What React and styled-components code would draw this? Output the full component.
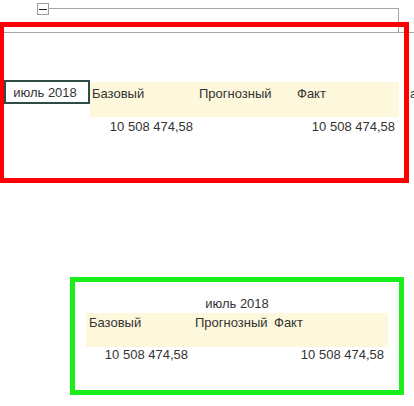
import React from 'react';
import styled, { createGlobalStyle } from 'styled-components';

const GlobalStyle = createGlobalStyle`
  body {
    margin: 0;
    background: #fff;
    font-family: "Liberation Sans", Arial, sans-serif;
    font-size: 13px;
    color: #333;
  }
`;

const Page = styled.div`
  width: 414px;
  height: 406px;
  overflow: hidden;
`;

const GroupHeader = styled.div`
  display: flex;
  align-items: flex-start;
  height: 32px;
  border-bottom: 1px solid #a6a6a6;
`;

const Toggle = styled.div`
  margin: 3px 0 0 37px;
  width: 10px;
  height: 10px;
  border: 1px solid #9c9c9c;
  display: flex;
  align-items: center;
  justify-content: center;
  &::before {
    content: '';
    width: 8px;
    height: 1px;
    background: #222;
  }
`;

const Bracket = styled.div`
  margin-top: 8px;
  width: 350px;
  height: 24px;
  border-top: 1px solid #a6a6a6;
  border-right: 1px solid #a6a6a6;
  box-sizing: border-box;
`;

const Frame = styled.div`
  position: relative;
  z-index: 1;
  box-sizing: border-box;
  width: ${(p) => p.$w}px;
  height: ${(p) => p.$h}px;
  margin: ${(p) => p.$m};
  border: 5px solid ${(p) => p.$color};
  border-left-width: ${(p) => p.$left || 5}px;
  padding: ${(p) => p.$pad};
`;

const Layout = styled.div`
  display: flex;
  align-items: flex-start;
`;

const PeriodCell = styled.div`
  flex: none;
  box-sizing: border-box;
  width: 86px;
  height: 24px;
  border: 2px solid #2f4b48;
  display: flex;
  align-items: center;
  justify-content: center;
  padding-right: 4px;
  white-space: nowrap;
`;

const Stack = styled.div`
  flex: none;
  width: fit-content;
  display: flex;
  flex-direction: column;
  margin-top: ${(p) => p.$top || 0}px;
`;

const PeriodTitle = styled.div`
  text-align: center;
  line-height: 15px;
  margin-bottom: 2px;
`;

const HeaderRow = styled.div`
  display: flex;
  align-items: flex-start;
  height: ${(p) => p.$h}px;
`;

const HeaderCell = styled.div`
  flex: none;
  box-sizing: border-box;
  width: ${(p) => p.$w}px;
  height: 100%;
  background: #fdf7dc;
  padding: ${(p) => p.$padTop}px 0 0 ${(p) => p.$padLeft}px;
  line-height: 15px;
  white-space: nowrap;
`;

const Overflow = styled.div`
  flex: none;
  width: 0;
  margin-left: ${(p) => p.$gap}px;
  padding-top: ${(p) => p.$padTop}px;
  line-height: 15px;
  white-space: nowrap;
`;

const ValueRow = styled.div`
  display: flex;
  height: ${(p) => p.$h}px;
  line-height: ${(p) => p.$h}px;
`;

const ValueCell = styled.div`
  flex: none;
  box-sizing: border-box;
  width: ${(p) => p.$w}px;
  padding-right: 4px;
  text-align: right;
  white-space: nowrap;
`;

const columns = ['Базовый', 'Прогнозный', 'Факт'];
const values = ['10 508 474,58', '', '10 508 474,58'];

function DataTable({ widths, headH, padTop, padLeft, rowH, extra }) {
  return (
    <>
      <HeaderRow $h={headH}>
        {columns.map((c, i) => (
          <HeaderCell key={c} $w={widths[i]} $padTop={padTop} $padLeft={padLeft}>
            {c}
          </HeaderCell>
        ))}
        {extra && (
          <Overflow $gap={11} $padTop={padTop}>
            {extra}
          </Overflow>
        )}
      </HeaderRow>
      <ValueRow $h={rowH}>
        {values.map((v, i) => (
          <ValueCell key={i} $w={widths[i]}>
            {v}
          </ValueCell>
        ))}
      </ValueRow>
    </>
  );
}

export default function App() {
  return (
    <Page>
      <GlobalStyle />
      <GroupHeader>
        <Toggle />
        <Bracket />
      </GroupHeader>

      <Frame $color="#ff0000" $w={409} $h={161} $m="-11px 0 0 0" $left={4} $pad="53px 0 0 0">
        <Layout>
          <PeriodCell>июль 2018</PeriodCell>
          <Stack $top={2}>
            <DataTable widths={[107, 98, 104]} headH={35} padTop={4} padLeft={2} rowH={20} extra="а" />
          </Stack>
        </Layout>
      </Frame>

      <Frame $color="#1aee1a" $w={334} $h={118} $m="94px 0 0 70px" $pad="14px 0 0 11px">
        <Stack>
          <PeriodTitle>июль 2018</PeriodTitle>
          <DataTable widths={[106, 79, 117]} headH={34} padTop={2} padLeft={3} rowH={16} />
        </Stack>
      </Frame>
    </Page>
  );
}
